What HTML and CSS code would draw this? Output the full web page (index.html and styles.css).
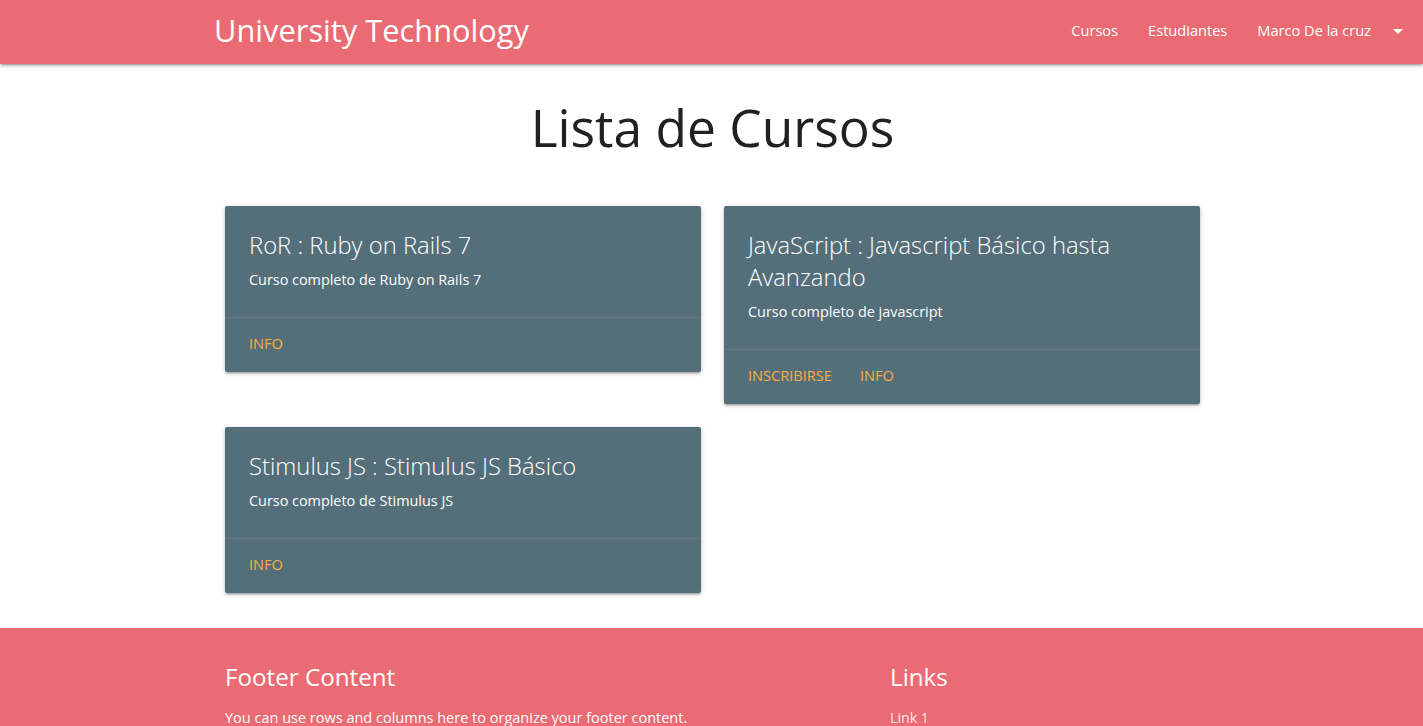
FILE: index.html
```html
<!DOCTYPE html>
<html lang="es">
<head>
<meta charset="utf-8">
<title>University Technology</title>
<link rel="stylesheet" href="styles.css">
</head>
<body>
<nav class="navbar">
  <a class="brand" href="#">University Technology</a>
  <ul class="nav-links">
    <li><a href="#">Cursos</a></li>
    <li><a href="#">Estudiantes</a></li>
    <li><a href="#" class="dropdown">Marco De la cruz<svg class="caret" width="24" height="24" viewBox="0 0 24 24"><path d="M7 10l5 5 5-5z" fill="#fff"/></svg></a></li>
  </ul>
</nav>

<main class="main">
  <h1 class="page-title">Lista de Cursos</h1>
  <div class="cards">
    <div class="card">
      <div class="card-content">
        <span class="card-title">RoR : Ruby on Rails 7</span>
        <p>Curso completo de Ruby on Rails 7</p>
      </div>
      <div class="card-action"><a href="#">Info</a></div>
    </div>
    <div class="card">
      <div class="card-content">
        <span class="card-title">JavaScript : Javascript Básico hasta Avanzando</span>
        <p>Curso completo de javascript</p>
      </div>
      <div class="card-action"><a href="#">Inscribirse</a><a href="#">Info</a></div>
    </div>
    <div class="card">
      <div class="card-content">
        <span class="card-title">Stimulus JS : Stimulus JS Básico</span>
        <p>Curso completo de Stimulus JS</p>
      </div>
      <div class="card-action"><a href="#">Info</a></div>
    </div>
  </div>
</main>

<footer class="footer">
  <div class="footer-inner">
    <div class="footer-col">
      <h5>Footer Content</h5>
      <p>You can use rows and columns here to organize your footer content.</p>
    </div>
    <div class="footer-col links">
      <h5>Links</h5>
      <ul>
        <li><a href="#">Link 1</a></li>
        <li><a href="#">Link 2</a></li>
      </ul>
    </div>
  </div>
</footer>
</body>
</html>
```

FILE: styles.css
```css
* { box-sizing: border-box; }
html, body { margin: 0; padding: 0; }
body {
  font-family: "Open Sans", "Noto Sans", sans-serif;
  color: rgba(0,0,0,0.87);
  background: #fff;
  overflow: hidden;
}
a { text-decoration: none; color: inherit; }

.navbar {
  height: 64px;
  background: #ea6b73;
  display: flex;
  align-items: flex-start;
  justify-content: space-between;
  padding-left: 214px;
  box-shadow: 0 2px 2px 0 rgba(0,0,0,.14), 0 3px 1px -2px rgba(0,0,0,.12), 0 1px 5px 0 rgba(0,0,0,.2);
  position: relative;
  z-index: 2;
}
.brand {
  color: #fff;
  font-size: 30.8px;
  line-height: 60px;
}
.nav-links {
  display: flex;
  list-style: none;
  margin: 0;
  padding: 0;
  height: 64px;
}
.nav-links a {
  display: flex;
  align-items: center;
  height: 60px;
  padding: 0 15px;
  color: #fff;
  font-size: 14.6px;
}
.caret { margin-left: 15px; margin-top: 2px; }
.nav-links li:last-child a { padding-right: 13px; }

.main {
  width: 975px;
  margin: 0 0 0 225px;
  padding-bottom: 35px;
}
.page-title {
  text-align: center;
  font-weight: 400;
  font-size: 51.5px;
  line-height: 1.1;
  margin: 0;
  padding: 35px 0 0;
  height: 134px;
  color: #212121;
}
.cards {
  margin-top: 8px;
  display: grid;
  grid-template-columns: 476px 476px;
  column-gap: 23px;
  row-gap: 23px;
  align-items: start;
}
.card {
  background: #546e7a;
  border-radius: 2px;
  color: #fff;
  box-shadow: 0 2px 2px 0 rgba(0,0,0,.14), 0 3px 1px -2px rgba(0,0,0,.12), 0 1px 5px 0 rgba(0,0,0,.2);
}
.card-content {
  padding: 23px 24px 25px;
}
.card-title {
  display: block;
  font-size: 23.8px;
  font-weight: 300;
  line-height: 32px;
  margin-bottom: 8px;
}
.card-content p {
  margin: 0;
  font-size: 14.4px;
  line-height: 22.5px;
}
.card-action {
  border-top: 1px solid rgba(160,160,160,0.2);
  padding: 14px 24px 18px;
  display: flex;
  gap: 28px;
}
.card-action a {
  color: #ffab40;
  text-transform: uppercase;
  font-size: 14.6px;
  line-height: 22.5px;
}

.footer {
  background: #ea6b73;
  color: #fff;
  height: 98px;
}
.footer-inner {
  display: flex;
  padding-left: 225px;
  padding-top: 33px;
}
.footer-col { width: 665px; }
.footer-col.links { width: 300px; }
.footer h5 {
  font-size: 24.2px;
  font-weight: 400;
  margin: 0 0 14px;
  line-height: 32px;
}
.footer p {
  margin: 0;
  font-size: 14.5px;
  line-height: 22px;
}
.footer ul { list-style: none; margin: 0; padding: 0; }
.footer li { font-size: 14.2px; line-height: 22px; }
.footer li a { color: rgba(255,255,255,0.88); }
```
